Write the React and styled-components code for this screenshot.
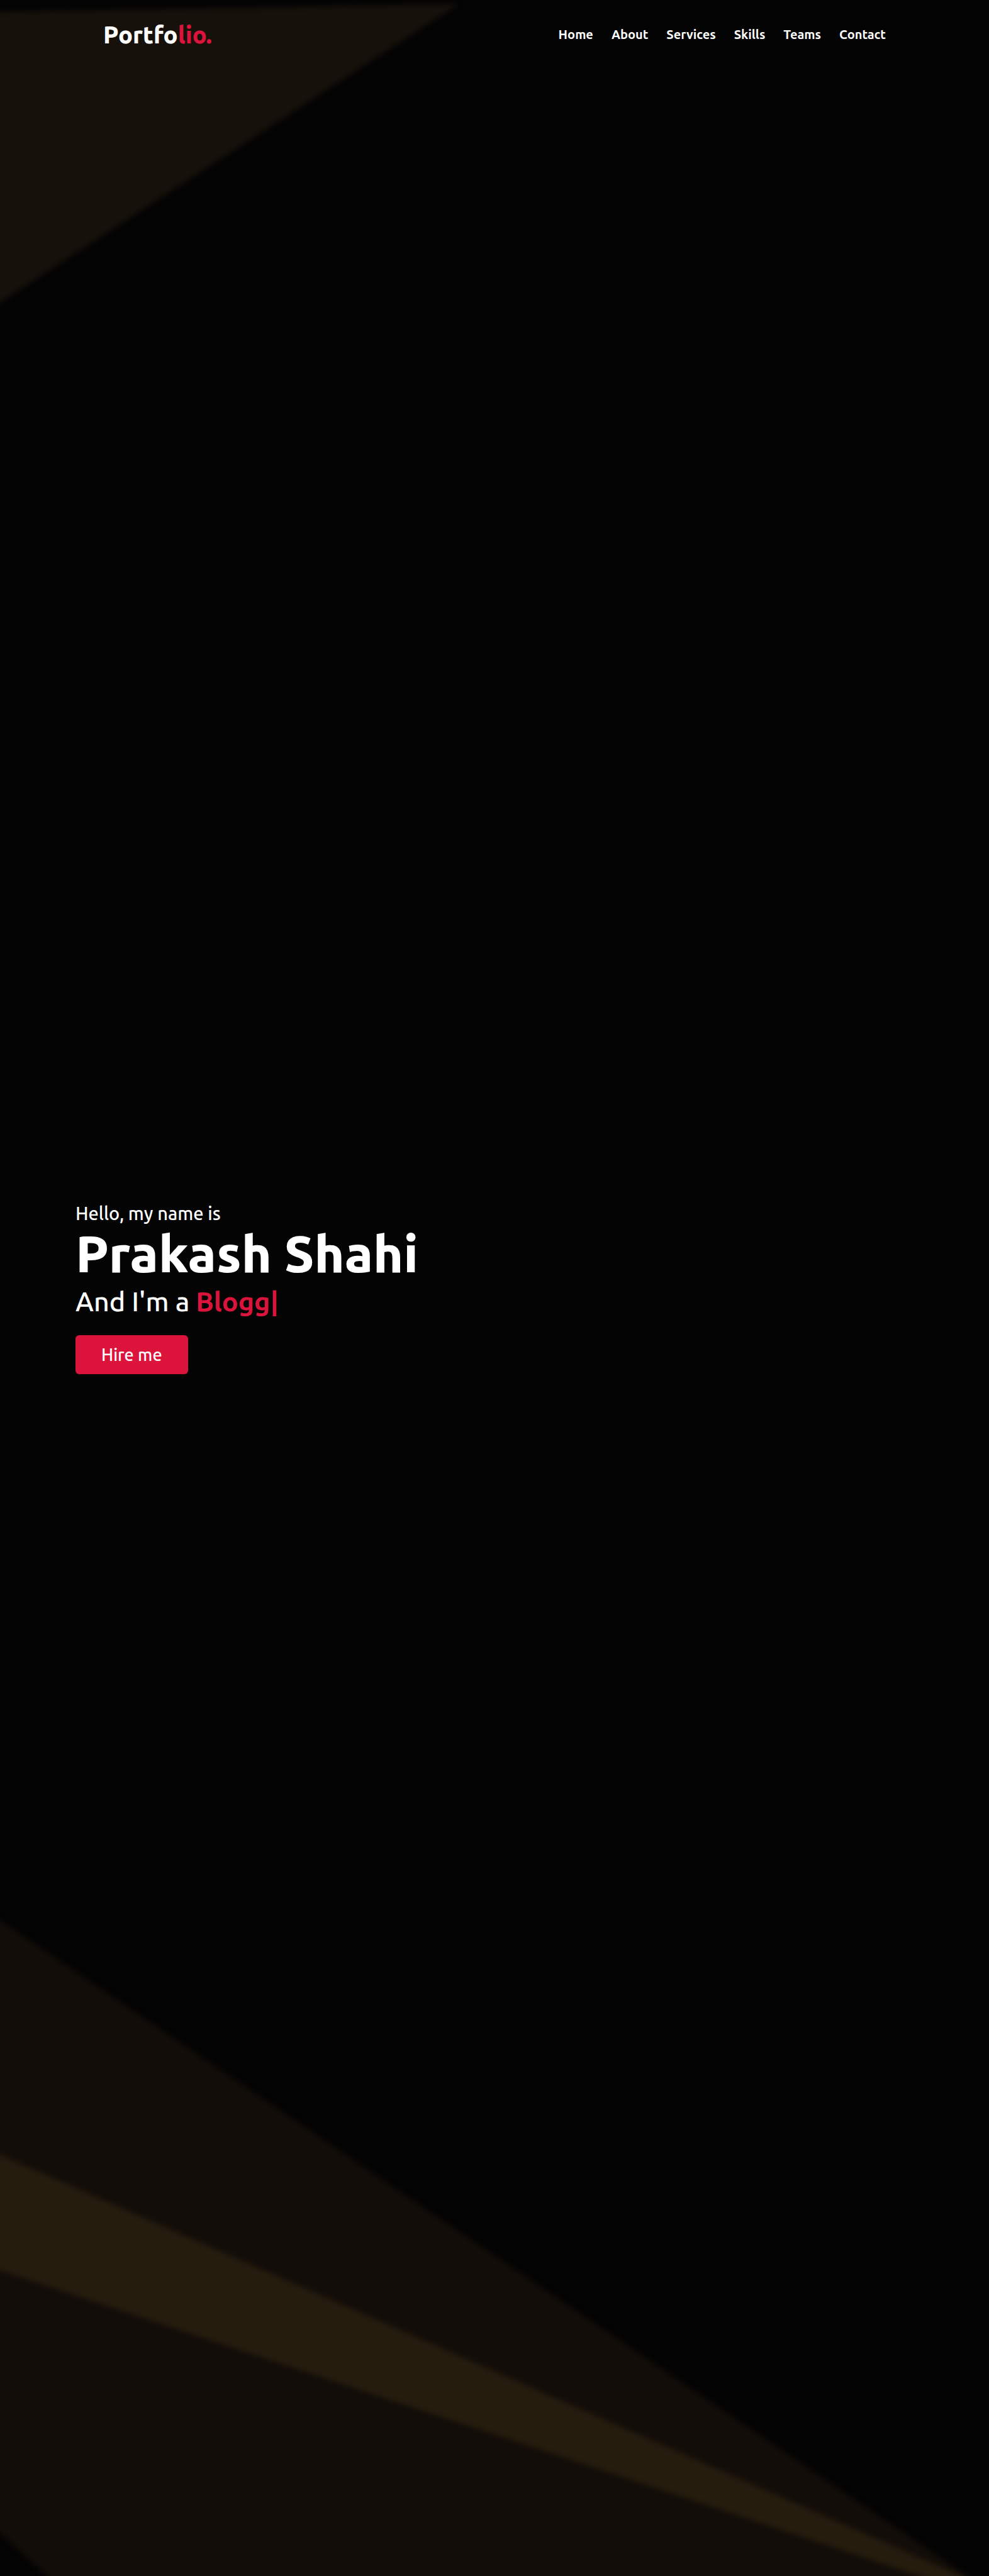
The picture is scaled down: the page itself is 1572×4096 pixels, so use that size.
import React from "react";
import styled, { createGlobalStyle } from "styled-components";

const GlobalStyle = createGlobalStyle`
  * { box-sizing: border-box; margin: 0; padding: 0; }
  body {
    background: #040404;
    color: #fff;
    font-family: Ubuntu, "Noto Sans", sans-serif;
    font-weight: 500;
  }
`;

const Page = styled.div`
  position: relative;
  display: flex;
  flex-direction: column;
  min-height: 100vh;
  overflow: hidden;
`;

const Backdrop = styled.svg`
  position: absolute;
  inset: 0;
  width: 100%;
  height: 100%;
  z-index: -1;
`;

const Header = styled.header`
  display: flex;
  align-items: center;
  justify-content: space-between;
  height: 110px;
  padding: 0 164px;
`;

const Logo = styled.a`
  color: #fff;
  font-size: 38px;
  line-height: 54px;
  font-weight: 800;
  text-decoration: none;
`;

const Accent = styled.span`
  color: crimson;
  font-weight: ${(p) => p.$weight || "inherit"};
`;

const Menu = styled.ul`
  display: flex;
  gap: 29px;
  list-style: none;
`;

const MenuLink = styled.a`
  color: #fff;
  font-size: 20px;
  line-height: 28px;
  font-weight: 600;
  text-decoration: none;
`;

const Hero = styled.main`
  flex: 1;
  display: flex;
  flex-direction: column;
  align-items: flex-start;
  justify-content: center;
  padding: 0 120px 110px;
`;

const Greeting = styled.p`
  font-size: 29px;
  line-height: 36px;
`;

const Name = styled.h1`
  font-size: 82px;
  line-height: 92px;
  font-weight: 800;
`;

const Role = styled.p`
  font-size: 43px;
  line-height: 60px;
`;

const HireButton = styled.button`
  margin-top: 24px;
  padding: 12px 41px;
  border: 0;
  border-radius: 6px;
  background: crimson;
  color: #fff;
  font-family: inherit;
  font-size: 27px;
  font-weight: inherit;
  line-height: 38px;
  cursor: pointer;
`;

const links = ["Home", "About", "Services", "Skills", "Teams", "Contact"];

export default function App() {
  return (
    <Page id="home">
      <GlobalStyle />
      <Backdrop viewBox="0 0 2880 7506" preserveAspectRatio="none" aria-hidden="true">
        <defs>
          <filter
            id="soft"
            filterUnits="userSpaceOnUse"
            x="-100"
            y="-100"
            width="3080"
            height="7706"
            colorInterpolationFilters="sRGB"
          >
            <feGaussianBlur stdDeviation="8" />
          </filter>
        </defs>
        <g filter="url(#soft)">
          <polygon points="-60,36 1335,12 -60,920" fill="#17110b" />
          <polygon points="-60,5555 2965,7606 247,7606 -60,7326" fill="#120d08" />
          <polygon points="-60,6252 2800,7506 2900,7580 -60,6595" fill="#251c0e" />
        </g>
      </Backdrop>
      <Header>
        <Logo href="#home">
          Portfo<Accent>lio.</Accent>
        </Logo>
        <nav aria-label="Main">
          <Menu>
            {links.map((label) => (
              <li key={label}>
                <MenuLink href={`#${label.toLowerCase()}`}>{label}</MenuLink>
              </li>
            ))}
          </Menu>
        </nav>
      </Header>
      <Hero>
        <Greeting>Hello, my name is</Greeting>
        <Name>Prakash Shahi</Name>
        <Role>
          And I'm a <Accent $weight={600}>Blogg|</Accent>
        </Role>
        <HireButton type="button">Hire me</HireButton>
      </Hero>
    </Page>
  );
}
